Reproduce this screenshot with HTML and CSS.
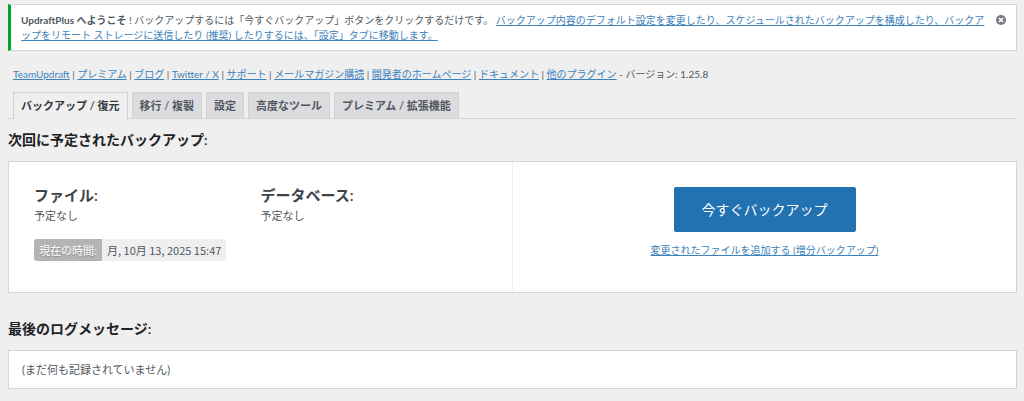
FILE: index.html
```html
<!DOCTYPE html>
<html lang="ja">
<head>
    <meta charset="UTF-8">
    <meta name="viewport" content="width=device-width, initial-scale=1.0">
    <title>UpdraftPlus</title>
    <link rel="stylesheet" href="styles.css">
</head>
<body>
    <div class="notice">
        <p><strong>UpdraftPlus へようこそ</strong> ! バックアップするには「今すぐバックアップ」ボタンをクリックするだけです。 <a href="#settings">バックアップ内容のデフォルト設定を変更したり、スケジュールされたバックアップを構成したり、バックアップをリモート ストレージに送信したり (推奨) したりするには、「設定」タブに移動します。</a></p>
        <button type="button" class="dismiss" aria-label="閉じる">
            <svg width="10" height="10" viewBox="0 0 10 10">
                <circle cx="5" cy="5" r="5" fill="#787c82"/>
                <path d="M3 3L7 7M7 3L3 7" stroke="#fff" stroke-width="1.7"/>
            </svg>
        </button>
    </div>

    <div class="links">
        <a href="#team">TeamUpdraft</a> |
        <a href="#premium">プレミアム</a> |
        <a href="#blog">ブログ</a> |
        <a href="#twitter">Twitter / X</a> |
        <a href="#support">サポート</a> |
        <a href="#newsletter">メールマガジン購読</a> |
        <a href="#developer">開発者のホームページ</a> |
        <a href="#docs">ドキュメント</a> |
        <a href="#plugins">他のプラグイン</a> - バージョン: 1.25.8
    </div>

    <nav class="tabs">
        <a href="#backups" class="tab active">バックアップ / 復元</a>
        <a href="#migrate" class="tab">移行 / 複製</a>
        <a href="#settings" class="tab">設定</a>
        <a href="#tools" class="tab">高度なツール</a>
        <a href="#addons" class="tab">プレミアム / 拡張機能</a>
    </nav>

    <h2>次回に予定されたバックアップ:</h2>
    <div class="panel schedule">
        <div class="next">
            <div class="columns">
                <div>
                    <h3>ファイル:</h3>
                    <p>予定なし</p>
                </div>
                <div>
                    <h3>データベース:</h3>
                    <p>予定なし</p>
                </div>
            </div>
            <div class="time">
                <span class="time-label">現在の時間:</span>
                <span class="time-value">月, 10月 13, 2025 15:47</span>
            </div>
        </div>
        <div class="actions">
            <button type="button" class="backup-now">今すぐバックアップ</button>
            <a href="#incremental">変更されたファイルを追加する (増分バックアップ)</a>
        </div>
    </div>

    <h2 class="log-title">最後のログメッセージ:</h2>
    <div class="panel log">(まだ何も記録されていません)</div>
</body>
</html>
```
FILE: styles.css
```css
* {
    box-sizing: border-box;
}
body {
    margin: 4px 7px 0 8px;
    background-color: #efefef;
    color: #50575e;
    font-family: Lato, "Noto Sans CJK JP", sans-serif;
    font-size: 10px;
    line-height: 15px;
}
p, h2, h3 {
    margin: 0;
}
a {
    color: #3c82bb;
    text-underline-offset: 1px;
}
button {
    font-family: inherit;
    cursor: pointer;
}
.notice {
    position: relative;
    padding: 8px 24px 7px 10px;
    background-color: #fff;
    border: 1px solid #d4d5d7;
    border-left: 3px solid #00a32a;
}
.dismiss {
    position: absolute;
    top: 10px;
    right: 10px;
    padding: 0;
    border: none;
    background: none;
    line-height: 0;
}
.links {
    margin-top: 16px;
    padding-left: 5px;
}
.tabs {
    display: flex;
    gap: 4px;
    margin-top: 10px;
    padding-left: 5px;
    border-bottom: 1px solid #d4d5d7;
}
.tab {
    padding: 5px 7px;
    background-color: #dcdcde;
    border: 1px solid #d0d1d3;
    border-bottom: none;
    color: #50575e;
    font-size: 11px;
    font-weight: 600;
    line-height: 15px;
    text-decoration: none;
}
.tab.active {
    margin-bottom: -1px;
    background-color: #efefef;
    color: #32373c;
}
h2 {
    margin: 11px 0;
    color: #1d2327;
    font-size: 14px;
    font-weight: 600;
    line-height: 20px;
}
.panel {
    background-color: #fff;
    border: 1px solid #d4d5d7;
}
.schedule {
    display: flex;
}
.next, .actions {
    flex: 1;
    padding: 25px;
}
.next {
    padding-bottom: 31px;
    border-right: 1px solid #f0f0f1;
    font-size: 11px;
}
.columns {
    display: grid;
    grid-template-columns: 1fr 1fr;
}
h3 {
    margin-bottom: 5px;
    color: #3c434a;
    font-size: 15px;
    font-weight: 600;
    line-height: 16px;
}
.time {
    display: flex;
    width: fit-content;
    margin-top: 16px;
    border-radius: 3px;
    background-color: #efefef;
    font-family: "Noto Sans CJK JP", sans-serif;
    line-height: 22px;
    overflow: hidden;
}
.time-label {
    padding: 0 5px;
    background-color: #b4b4b4;
    color: #fff;
    text-shadow: 0 1px 1px #888;
}
.time-value {
    padding: 0 5px;
}
.actions {
    display: flex;
    flex-direction: column;
    align-items: center;
    gap: 11px;
}
.backup-now {
    padding: 0 27px;
    background-color: #2271b1;
    border: 1px solid #2271b1;
    border-radius: 2px;
    color: #fff;
    font-size: 14px;
    line-height: 43px;
}
.log-title {
    margin-top: 26px;
}
.log {
    padding: 11px 13px;
    font-size: 11px;
}
```
